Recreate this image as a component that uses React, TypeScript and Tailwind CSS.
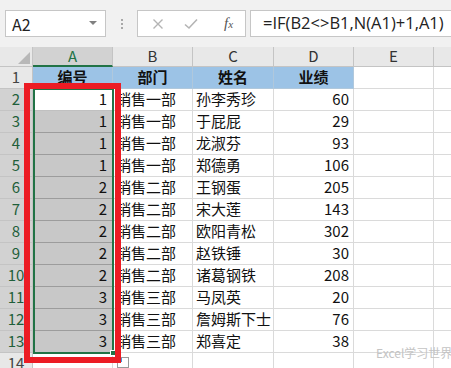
import React from "react";

const rows = [
  { n: 1, dept: "销售一部", name: "孙李秀珍", score: 60 },
  { n: 1, dept: "销售一部", name: "于屁屁", score: 29 },
  { n: 1, dept: "销售一部", name: "龙淑芬", score: 93 },
  { n: 1, dept: "销售一部", name: "郑德勇", score: 106 },
  { n: 2, dept: "销售二部", name: "王钢蛋", score: 205 },
  { n: 2, dept: "销售二部", name: "宋大莲", score: 143 },
  { n: 2, dept: "销售二部", name: "欧阳青松", score: 302 },
  { n: 2, dept: "销售二部", name: "赵铁锤", score: 30 },
  { n: 2, dept: "销售二部", name: "诸葛钢铁", score: 208 },
  { n: 3, dept: "销售三部", name: "马凤英", score: 20 },
  { n: 3, dept: "销售三部", name: "詹姆斯下士", score: 76 },
  { n: 3, dept: "销售三部", name: "郑喜定", score: 38 },
];

const font = { fontFamily: '"Noto Sans CJK SC", "Noto Sans", sans-serif' };

function RowHead({ label, selected }: { label: string; selected?: boolean }) {
  return (
    <div
      className={`w-[33px] shrink-0 flex items-center justify-center border-r border-b border-[#c4c4c4] text-[15px] ${
        selected ? "bg-[#d2d2d2] text-[#1f5f3a]" : "bg-[#e8e8e8] text-[#444]"
      }`}
    >
      {label}
    </div>
  );
}

export default function App() {
  return (
    <div className="relative w-[451px] h-[368px] overflow-hidden bg-[#f1f1f1] text-[#111]" style={font}>
      {/* Formula bar */}
      <div className="h-[47px] flex items-start pt-[10px]">
        <div className="ml-[5px] w-[101px] h-[27px] bg-white border border-[#c6c6c6] flex items-center justify-between pl-[6px] pr-[8px]">
          <span className="text-[16px] text-[#222]">A2</span>
          <svg width="8" height="5" viewBox="0 0 8 5">
            <path d="M0 0 L8 0 L4 4 Z" fill="#808080" />
          </svg>
        </div>
        <div className="w-[31px] h-[27px] flex flex-col items-center justify-center gap-[2px]">
          <span className="w-[2px] h-[2px] bg-[#a8a8a8]" />
          <span className="w-[2px] h-[2px] bg-[#a8a8a8]" />
          <span className="w-[2px] h-[2px] bg-[#a8a8a8]" />
        </div>
        <div className="w-[109px] h-[27px] bg-white border border-[#c6c6c6] flex items-center pl-[14px]">
          <svg width="12" height="12" viewBox="0 0 12 12">
            <path d="M1.5 1.5 L10.5 10.5 M10.5 1.5 L1.5 10.5" stroke="#b4b4b4" strokeWidth="1.4" />
          </svg>
          <svg className="ml-[20px]" width="14" height="12" viewBox="0 0 14 12">
            <path d="M1 6.5 L5 10 L13 1.5" stroke="#b4b4b4" strokeWidth="1.6" fill="none" />
          </svg>
          <span
            className="ml-[26px] text-[15px] italic text-[#555]"
            style={{ fontFamily: '"Liberation Serif", serif' }}
          >
            f<span className="text-[11px]">x</span>
          </span>
        </div>
        <div className="ml-[4px] flex-1 h-[27px] bg-white border border-[#c6c6c6] border-r-0 flex items-center pl-[12px]">
          <span className="text-[16.5px] text-[#222] whitespace-nowrap" style={{ fontFamily: '"Open Sans", sans-serif' }}>
            =IF(B2&lt;&gt;B1,N(A1)+1,A1)
          </span>
        </div>
      </div>

      {/* Sheet */}
      <div className="flex flex-col">
        {/* column header */}
        <div className="flex h-[20px]">
          <div className="w-[33px] shrink-0 bg-[#e8e8e8] border-r border-b border-[#c4c4c4] flex items-end justify-end p-[2px]">
            <svg width="12" height="12" viewBox="0 0 12 12">
              <path d="M12 0 L12 12 L0 12 Z" fill="#b8b8b8" />
            </svg>
          </div>
          <div className="w-[80px] shrink-0 bg-[#d2d2d2] border-r border-[#c4c4c4] border-b-2 border-b-[#217346] flex items-center justify-center text-[15px] text-[#217346]">
            A
          </div>
          {[
            ["B", "w-[80px]"],
            ["C", "w-[81px]"],
            ["D", "w-[80px]"],
            ["E", "w-[80px]"],
            ["", "w-[40px]"],
          ].map(([l, w]) => (
            <div
              key={l + w}
              className={`${w} shrink-0 bg-[#e8e8e8] border-r border-b border-[#c4c4c4] flex items-center justify-center text-[15px] text-[#333]`}
            >
              {l}
            </div>
          ))}
        </div>

        {/* row 1 header */}
        <div className="flex h-[22px]">
          <RowHead label="1" />
          <div className="w-[80px] shrink-0 bg-[#9cc3e6] border-r border-b border-[#b0c8dc] flex items-center justify-center text-[15px] font-bold">
            编号
          </div>
          <div className="w-[80px] shrink-0 bg-[#9cc3e6] border-r border-b border-[#b0c8dc] flex items-center justify-center text-[15px] font-bold">
            部门
          </div>
          <div className="w-[81px] shrink-0 bg-[#9cc3e6] border-r border-b border-[#b0c8dc] flex items-center justify-center text-[15px] font-bold">
            姓名
          </div>
          <div className="w-[80px] shrink-0 bg-[#9cc3e6] border-r border-b border-[#b0c8dc] flex items-center justify-center text-[15px] font-bold">
            业绩
          </div>
          <div className="w-[80px] shrink-0 bg-white border-r border-b border-[#dadada]" />
          <div className="w-[40px] shrink-0 bg-white border-r border-b border-[#dadada]" />
        </div>

        {rows.map((r, i) => (
          <div key={i} className="flex h-[22px]">
            <RowHead label={String(i + 2)} selected />
            <div
              className={`w-[80px] shrink-0 border-r border-b flex items-center justify-end pr-[5px] text-[15px] ${
                i === 0 ? "bg-white border-[#c0c0c0]" : "bg-[#c8c8c8] border-[#9c9c9c]"
              }`}
            >
              {r.n}
            </div>
            <div className="w-[80px] shrink-0 bg-white border-r border-b border-[#dadada] flex items-center pl-[3px] text-[15px] whitespace-nowrap overflow-hidden">
              {r.dept}
            </div>
            <div className="w-[81px] shrink-0 bg-white border-r border-b border-[#dadada] flex items-center pl-[3px] text-[15px] whitespace-nowrap">
              {r.name}
            </div>
            <div className="w-[80px] shrink-0 bg-white border-r border-b border-[#dadada] flex items-center justify-end pr-[4px] text-[15px]">
              {r.score}
            </div>
            <div className="w-[80px] shrink-0 bg-white border-r border-b border-[#dadada]" />
            <div className="w-[40px] shrink-0 bg-white border-r border-b border-[#dadada]" />
          </div>
        ))}

        <div className="flex h-[22px]">
          <RowHead label="14" />
          <div className="w-[80px] shrink-0 bg-white border-r border-b border-[#dadada]" />
          <div className="w-[80px] shrink-0 bg-white border-r border-b border-[#dadada]" />
          <div className="w-[81px] shrink-0 bg-white border-r border-b border-[#dadada]" />
          <div className="w-[80px] shrink-0 bg-white border-r border-b border-[#dadada]" />
          <div className="w-[80px] shrink-0 bg-white border-r border-b border-[#dadada]" />
          <div className="w-[40px] shrink-0 bg-white border-r border-b border-[#dadada]" />
        </div>
      </div>

      {/* selection border */}
      <div className="absolute left-[33px] top-[88px] w-[81px] h-[266px] border-2 border-[#217346] pointer-events-none" />
      <div className="absolute left-[110px] top-[350px] w-[6px] h-[6px] bg-[#217346] border border-white" />

      {/* paste options */}
      <div className="absolute left-[117px] top-[357px] w-[12px] h-[11px] border border-[#9a9a9a] bg-white">
        <div className="w-[4px] h-[4px] bg-[#4a90d9]" />
      </div>

      {/* red annotation */}
      <div className="absolute left-[24px] top-[83px] w-[97px] h-[280px] border-[6px] border-[#ec1c24] pointer-events-none" />

      {/* watermark */}
      <div className="absolute left-[376px] top-[344px] text-[12px] text-[#c4c4c4] whitespace-nowrap">
        Excel学习世界
      </div>
    </div>
  );
}
